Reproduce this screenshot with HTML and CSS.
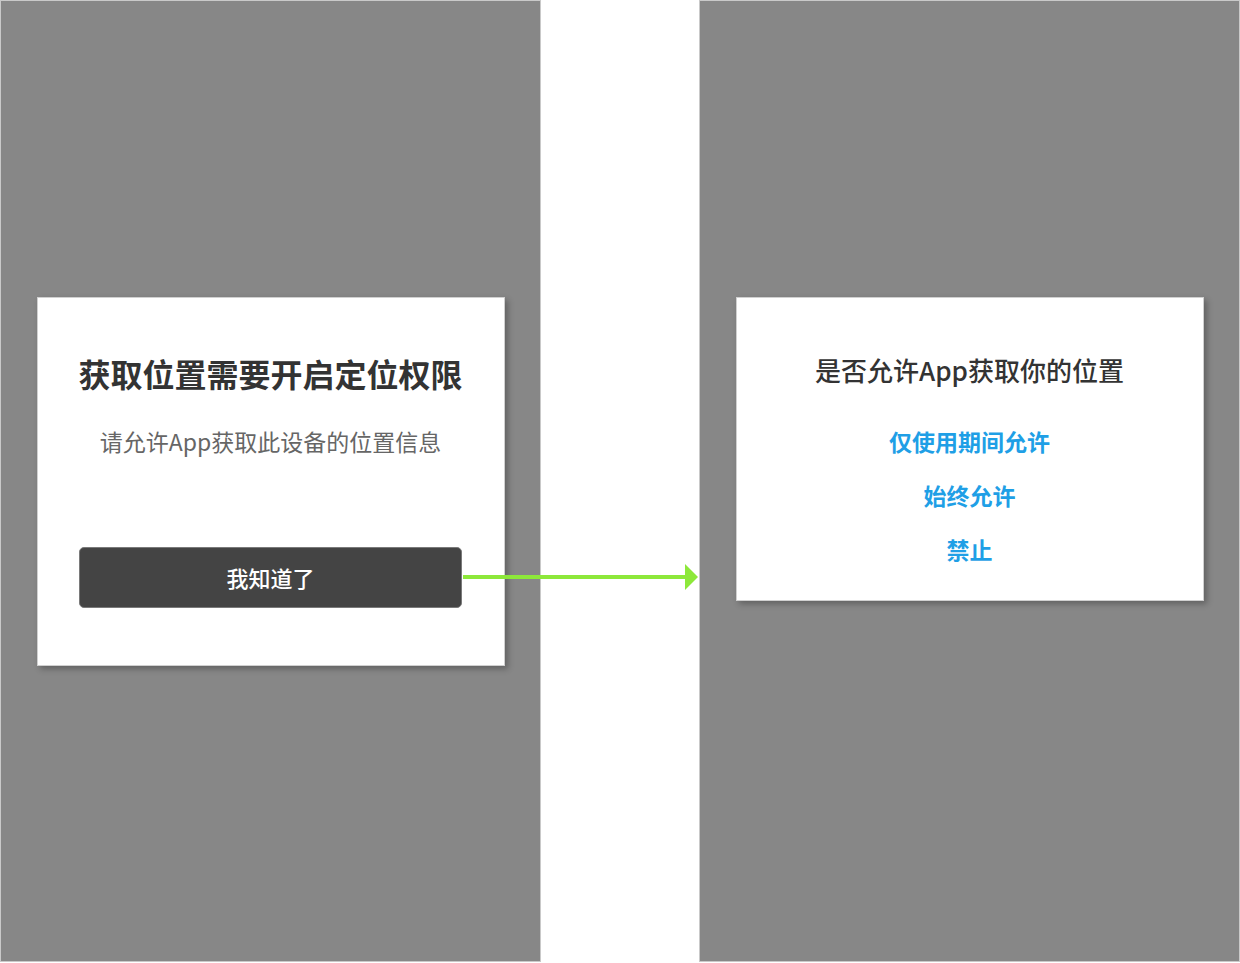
FILE: index.html
```html
<!DOCTYPE html>
<html lang="zh-CN">
<head>
<meta charset="utf-8">
<title>定位权限</title>
<link rel="stylesheet" href="styles.css">
</head>
<body>
<div class="stage">
  <div class="panel">
    <div class="dialog dialog-guide">
      <h1 class="guide-title">获取位置需要开启定位权限</h1>
      <p class="guide-text">请允许App获取此设备的位置信息</p>
      <button class="guide-btn">我知道了</button>
    </div>
  </div>
  <div class="panel">
    <div class="dialog dialog-ask">
      <h2 class="ask-title">是否允许App获取你的位置</h2>
      <div class="options">
        <div class="option">仅使用期间允许</div>
        <div class="option">始终允许</div>
        <div class="option">禁止</div>
      </div>
    </div>
  </div>
  <svg class="arrow" width="236" height="28" viewBox="0 0 236 28">
    <line x1="0" y1="14" x2="226" y2="14" stroke="#8de83a" stroke-width="4"/>
    <polygon points="222,1 235,14 222,27" fill="#8de83a"/>
  </svg>
</div>
</body>
</html>
```
FILE: styles.css
```css
html, body {
  margin: 0;
  padding: 0;
  background: #ffffff;
}
body {
  font-family: "Noto Sans CJK SC", "Noto Sans", sans-serif;
}
.stage {
  position: relative;
  width: 1240px;
  height: 963px;
  display: flex;
  justify-content: space-between;
}
.panel {
  box-sizing: border-box;
  width: 541px;
  height: 962px;
  background: #878787;
  border: 1px solid #c9c9c9;
  display: flex;
  justify-content: center;
  align-items: flex-start;
  padding-top: 296px;
}
.dialog {
  box-sizing: border-box;
  width: 468px;
  background: #ffffff;
  border: 1px solid #d0d0d0;
  box-shadow: 3px 3px 6px rgba(0, 0, 0, 0.28);
  display: flex;
  flex-direction: column;
  align-items: center;
}
.dialog-guide {
  height: 369px;
  padding: 55px 42px 0;
}
.guide-title {
  margin: 0;
  font-size: 32px;
  line-height: 40px;
  font-weight: 700;
  color: #333333;
  white-space: nowrap;
}
.guide-text {
  margin: 33px 0 0;
  font-size: 23px;
  line-height: 30px;
  color: #666666;
  white-space: nowrap;
}
.guide-btn {
  margin-top: 91px;
  width: 383px;
  height: 61px;
  box-sizing: border-box;
  background: #444444;
  border: 1px solid #7a7a7a;
  border-radius: 5px;
  color: #ffffff;
  font-family: inherit;
  font-size: 22px;
  line-height: 56px;
  font-weight: 500;
  padding: 0 0 2px;
}
.dialog-ask {
  height: 304px;
  padding-top: 56px;
}
.ask-title {
  margin: 0;
  font-size: 26px;
  line-height: 32px;
  font-weight: 500;
  color: #333333;
  white-space: nowrap;
}
.options {
  margin-top: 39px;
  display: flex;
  flex-direction: column;
  align-items: center;
  gap: 22px;
}
.option {
  font-size: 23px;
  line-height: 32px;
  font-weight: 700;
  color: #1f9fe6;
}
.arrow {
  position: absolute;
  left: 463px;
  top: 563px;
}
```
